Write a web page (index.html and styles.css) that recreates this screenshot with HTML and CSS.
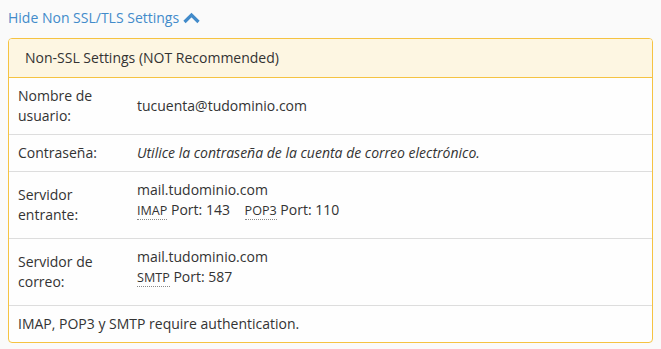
FILE: index.html
```html
<!DOCTYPE html>
<html lang="es">
<head>
<meta charset="utf-8">
<title>Non-SSL Settings</title>
<link rel="stylesheet" href="styles.css">
</head>
<body>
<a class="toggle" href="#">Hide Non SSL/TLS Settings <svg class="chev" width="17" height="12" viewBox="0 0 17 12" aria-hidden="true"><path d="M1.5 10 L8.5 3 L15.5 10" fill="none" stroke="currentColor" stroke-width="3.2" stroke-linecap="butt" stroke-linejoin="miter"/></svg></a>
<div class="panel">
  <div class="panel-heading">Non-SSL Settings (NOT Recommended)</div>
  <div class="row">
    <div class="label">Nombre de usuario:</div>
    <div class="value">tucuenta@tudominio.com</div>
  </div>
  <div class="row">
    <div class="label">Contraseña:</div>
    <div class="value"><em>Utilice la contraseña de la cuenta de correo electrónico.</em></div>
  </div>
  <div class="row">
    <div class="label">Servidor entrante:</div>
    <div class="value top">
      <div>mail.tudominio.com</div>
      <div class="ports"><abbr title="Internet Message Access Protocol">IMAP</abbr> Port: 143 <span class="sep"></span><abbr title="Post Office Protocol 3">POP3</abbr> Port: 110</div>
    </div>
  </div>
  <div class="row">
    <div class="label">Servidor de correo:</div>
    <div class="value top">
      <div>mail.tudominio.com</div>
      <div class="ports"><abbr title="Simple Mail Transfer Protocol">SMTP</abbr> Port: 587</div>
    </div>
  </div>
  <div class="footer">IMAP, POP3 y SMTP require authentication.</div>
</div>
</body>
</html>
```

FILE: styles.css
```css
html, body {
  background: #fafafa;
}
body {
  margin: 8px;
  font-family: "Open Sans", "Noto Sans", sans-serif;
  font-size: 14px;
  line-height: 20px;
  color: #333;
}
.toggle {
  display: inline-block;
  color: #428bca;
  text-decoration: none;
}
.chev {
  vertical-align: -1px;
  margin-left: 0;
}
.panel {
  margin-top: 10px;
  border: 1px solid #f5c342;
  border-radius: 4px;
  background: #fefefe;
  overflow: hidden;
}
.panel-heading {
  background: #fdf6e2;
  padding: 9px 16px 9px 16px;
  border-bottom: 1px solid #f5c342;
}
.row {
  display: grid;
  grid-template-columns: 120px 1fr;
  border-bottom: 1px solid #dddddd;
}
.label {
  padding: 8px 8px 8px 9px;
  align-self: center;
}
.value {
  padding: 8px;
  align-self: center;
}
.value.top {
  align-self: start;
}
.ports {
  height: 20px;
  margin-bottom: 10px;
}
abbr {
  font-size: 12.6px;
  line-height: 1;
  text-decoration: none;
  border-bottom: 1px dotted #888;
  cursor: help;
}
.sep {
  display: inline-block;
  width: 11px;
}
.footer {
  padding: 8px 9px;
}
```
